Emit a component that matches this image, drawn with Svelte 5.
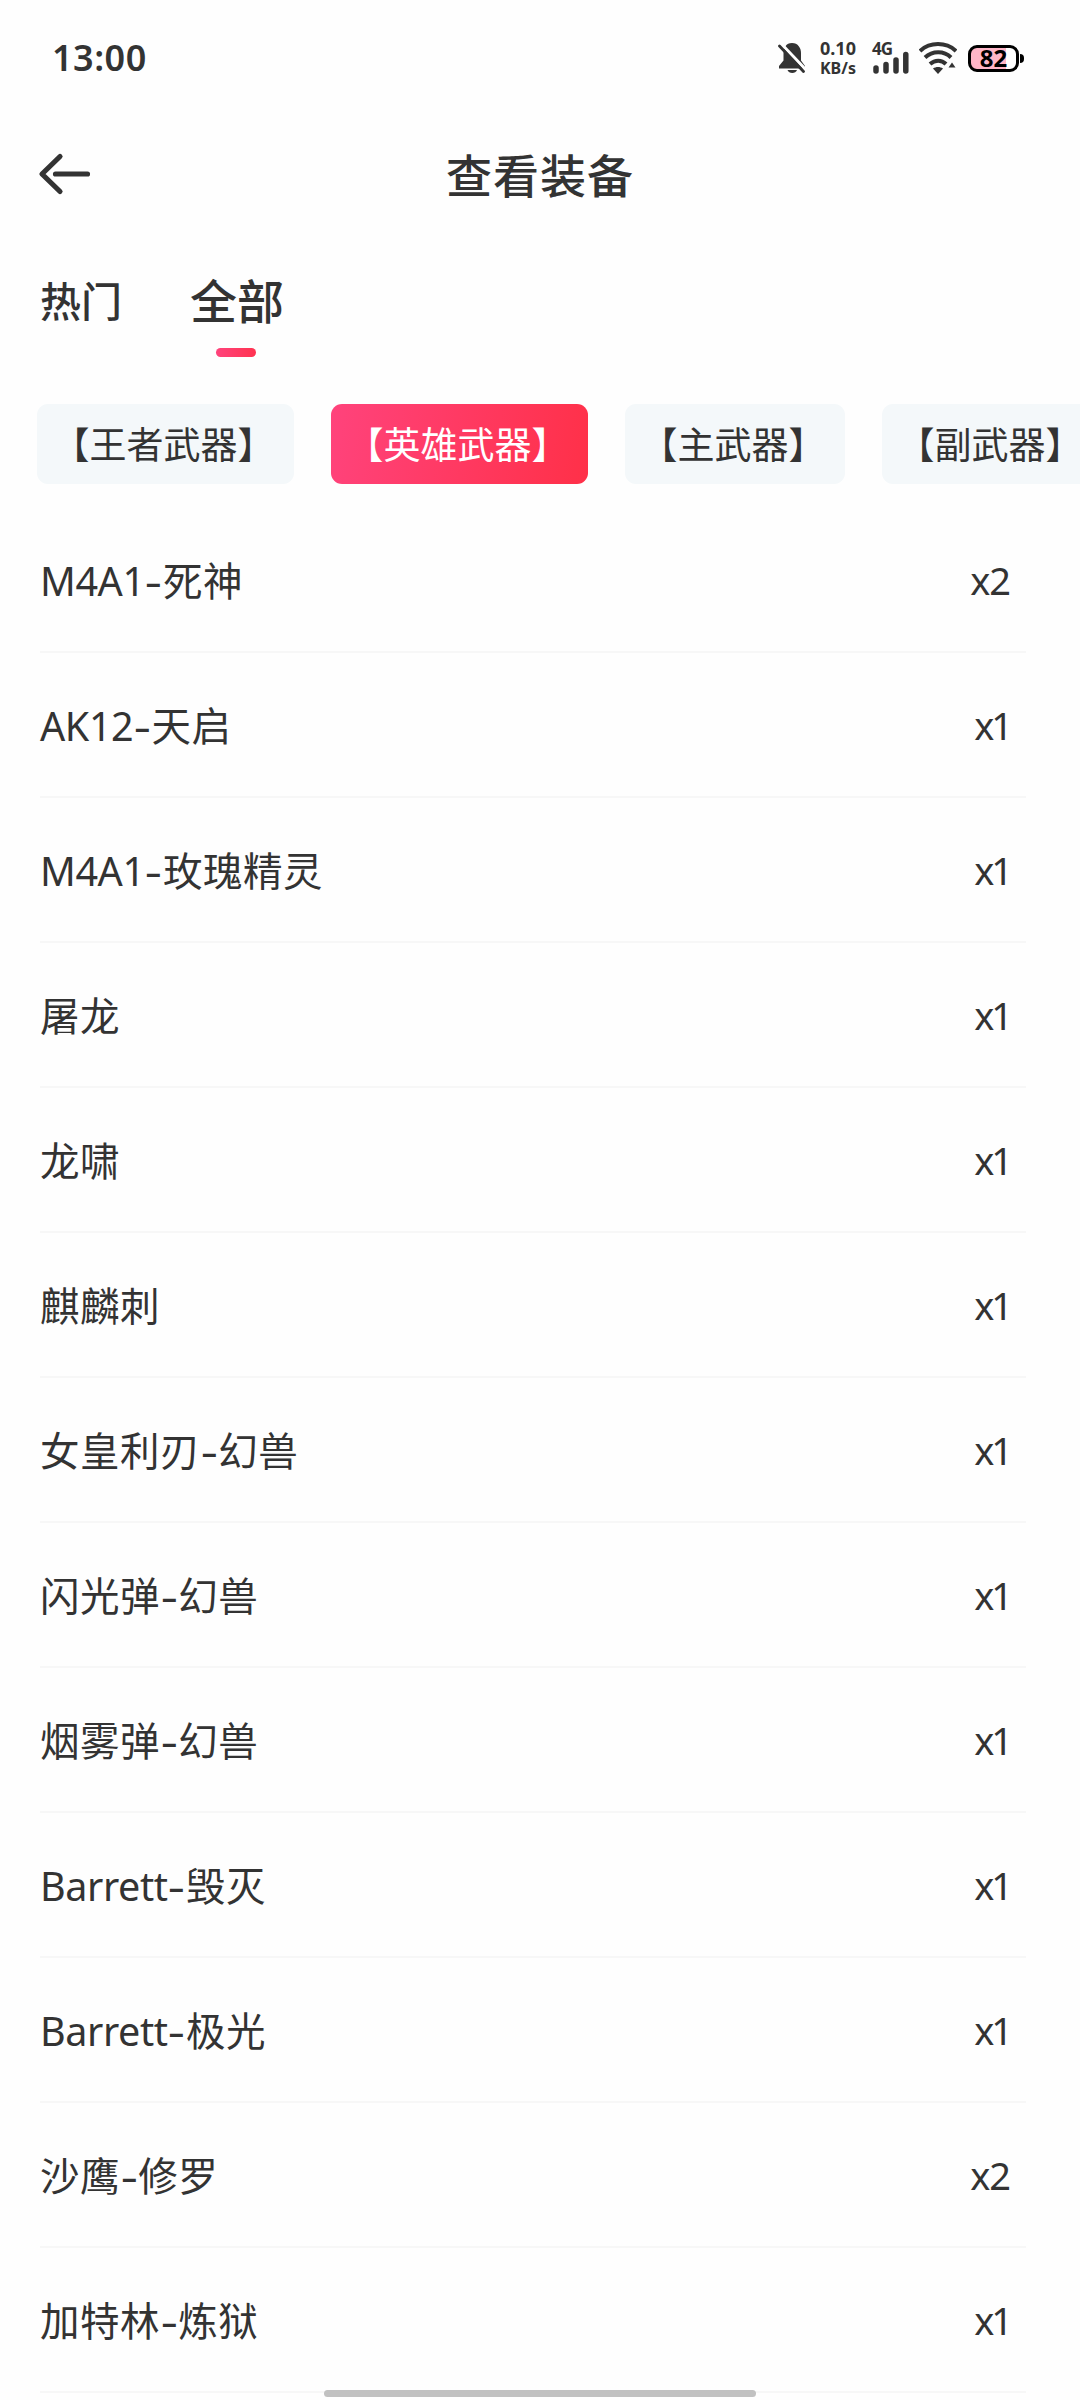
<script lang="ts">
	type Equipment = { name: string; count: number };

	const tabs = ['热门', '全部'];
	const categories = ['【王者武器】', '【英雄武器】', '【主武器】', '【副武器】'];
	const equipments: Equipment[] = [
		{ name: 'M4A1-死神', count: 2 },
		{ name: 'AK12-天启', count: 1 },
		{ name: 'M4A1-玫瑰精灵', count: 1 },
		{ name: '屠龙', count: 1 },
		{ name: '龙啸', count: 1 },
		{ name: '麒麟刺', count: 1 },
		{ name: '女皇利刃-幻兽', count: 1 },
		{ name: '闪光弹-幻兽', count: 1 },
		{ name: '烟雾弹-幻兽', count: 1 },
		{ name: 'Barrett-毁灭', count: 1 },
		{ name: 'Barrett-极光', count: 1 },
		{ name: '沙鹰-修罗', count: 2 },
		{ name: '加特林-炼狱', count: 1 }
	];

	let selectedTab = '全部';
	let selectedCategory = '【英雄武器】';
</script>

<div class="screen">
	<div class="status">
		<span class="time">13:00</span>
		<div class="indicators">
			<svg class="bell" width="29" height="34" viewBox="0 0 29 34">
				<path
					d="M14 2C8 2 5.500 7 5.500 12v7.500L1 25v2.500h26V25l-4-5.500V12C23 7 20 2 14 2Z"
					fill="#333"
				/>
				<path d="M9.500 29h9.500c-1.200 4-8.300 4-9.500 0Z" fill="#333" />
				<path d="M3.500 3 28 29" stroke="#fff" stroke-width="3" />
				<path d="M1.500 5 25.500 30.500" stroke="#333" stroke-width="2.800" stroke-linecap="round" />
			</svg>
			<div class="speed">
				<span>0.10</span>
				<span>KB/s</span>
			</div>
			<div class="mobile">
				<span>4G</span>
				<svg width="38" height="34" viewBox="0 0 38 34" stroke="#333" stroke-width="5.500" stroke-linecap="round">
					<path d="M4 27v3M14 23.500v6.500M24 19v11M33.800 13.500V30" />
				</svg>
			</div>
			<svg class="wifi" width="38" height="34" viewBox="0 0 38 34" fill="none" stroke="#333" stroke-width="4">
				<path d="M1 10C11 .800 27 .800 37 10" />
				<path d="M6 16.500c7.500-7 19-7 26 0" />
				<path d="M11 23c5-4.500 11.500-4.500 16 0" />
				<path d="m14 27.500 5 5.500 5-5.500c-3-2-7-2-10 0Z" fill="#333" stroke="none" />
				<path d="m29.500 26.500 3.500-5 3.500 5Z" fill="#333" stroke="none" />
			</svg>
			<div class="battery">
				<span>82</span>
			</div>
		</div>
	</div>

	<header>
		<button class="back" aria-label="返回">
			<svg width="54" height="44" viewBox="0 0 54 44">
				<path
					d="M22 4.500 4 22l18 17.500M17.500 22H49.500"
					fill="none"
					stroke="#333"
					stroke-width="5.200"
					stroke-linecap="round"
					stroke-linejoin="round"
				/>
			</svg>
		</button>
		<h1>查看装备</h1>
	</header>

	<nav>
		{#each tabs as tab}
			<button class="tab" class:active={tab === selectedTab} on:click={() => (selectedTab = tab)}>
				{tab}
			</button>
		{/each}
	</nav>

	<div class="categories">
		{#each categories as category}
			<button
				class="category"
				class:active={category === selectedCategory}
				on:click={() => (selectedCategory = category)}>{category}</button
			>
		{/each}
	</div>

	<ul>
		{#each equipments as { name, count }}
			<li>
				<span class="name">
					{#each name.split('-') as part, i}{#if i > 0}<span class="dash">-</span>{/if}<span
							class:latin={/^[A-Z]/.test(part)}>{part}</span
						>{/each}
				</span>
				<span class="count" class:single={count === 1}>x{count}</span>
			</li>
		{/each}
	</ul>

	<div class="home-bar"></div>
</div>

<style>
	:global(body) {
		margin: 0;
		background: #fefefe;
	}

	.screen {
		position: relative;
		width: 1080px;
		height: 2400px;
		overflow: hidden;
		background: #fefefe;
		color: #333;
		font-family: 'Noto Sans', 'Noto Sans CJK SC', sans-serif;
	}

	button {
		margin: 0;
		padding: 0;
		border: none;
		background: none;
		color: inherit;
		font: inherit;
	}

	.status {
		display: flex;
		justify-content: space-between;
		align-items: center;
		height: 116px;
		padding: 0 55px 0 52px;
	}

	.time {
		padding-bottom: 2px;
		font-size: 36px;
		font-weight: 600;
		letter-spacing: 0.5px;
	}

	.indicators {
		display: flex;
		align-items: center;
	}

	.bell {
		margin-right: 13px;
	}

	.speed {
		display: flex;
		flex-direction: column;
		width: 40px;
		margin-right: 12px;
		font-size: 18px;
		font-weight: 700;
		line-height: 20px;
	}

	.speed span:last-child {
		font-size: 16px;
	}

	.mobile {
		position: relative;
		height: 34px;
		margin-right: 9px;
	}

	.mobile span {
		position: absolute;
		left: 0;
		top: -2px;
		font-size: 17px;
		font-weight: 700;
		line-height: 20px;
		letter-spacing: -1px;
	}

	.wifi {
		margin-right: 11px;
	}

	.battery {
		position: relative;
		box-sizing: border-box;
		width: 51px;
		height: 27px;
		margin-right: 6px;
		border: 3px solid #000;
		border-radius: 9px;
		background: linear-gradient(90deg, #ffb6c8 78%, #fff 78%);
		color: #000;
		font-size: 24px;
		font-weight: 700;
		line-height: 20px;
		text-align: center;
	}

	.battery::after {
		content: '';
		position: absolute;
		top: 6px;
		right: -8px;
		width: 4px;
		height: 9px;
		border-radius: 0 5px 5px 0;
		background: #000;
	}

	header {
		display: grid;
		grid-template-columns: 100px 1fr 100px;
		align-items: center;
		height: 116px;
	}

	.back {
		display: flex;
		padding-left: 38px;
	}

	h1 {
		margin: 0;
		padding-bottom: 3px;
		font-size: 46px;
		font-weight: 500;
		letter-spacing: 1px;
		text-align: center;
	}

	nav {
		display: flex;
		align-items: center;
		gap: 68px;
		height: 133px;
		padding: 0 0 7px 40px;
	}

	.tab {
		position: relative;
		font-size: 41px;
		font-weight: 500;
	}

	.tab.active {
		font-size: 47px;
		font-weight: 500;
	}

	.tab.active::after {
		content: '';
		position: absolute;
		left: 50%;
		bottom: -24px;
		width: 40px;
		height: 9px;
		margin-left: -21px;
		border-radius: 5px;
		background: linear-gradient(90deg, #ff437c, #ff3350);
	}

	.categories {
		display: flex;
		gap: 37px;
		margin-top: 32px;
		padding-left: 37px;
	}

	.category {
		flex: none;
		box-sizing: border-box;
		height: 80px;
		padding: 2px 19.500px 0 15.500px;
		border-radius: 11px;
		background: #f4f8fa;
		font-size: 37px;
		line-height: 78px;
		white-space: nowrap;
	}

	.category.active {
		background: linear-gradient(100deg, #ff437c, #ff3048);
		color: #fff;
	}

	ul {
		margin: 24px 54px 0 40px;
		padding: 0;
		list-style: none;
	}

	li {
		display: flex;
		justify-content: space-between;
		align-items: center;
		box-sizing: border-box;
		height: 145px;
		padding-right: 16px;
		border-bottom: 2px solid #f7f7f7;
		font-size: 39.500px;
	}

	.name {
		padding-bottom: 2px;
		letter-spacing: 0.5px;
	}

	.latin {
		letter-spacing: -0.4px;
	}

	.dash {
		display: inline-block;
		margin: 0 2.500px;
		transform: scaleX(1.35);
	}

	.count {
		padding-top: 1px;
		font-size: 38px;
		letter-spacing: -1px;
	}

	.count.single {
		letter-spacing: -3px;
	}

	.home-bar {
		position: absolute;
		left: 324px;
		bottom: 3px;
		width: 432px;
		height: 7px;
		border-radius: 4px;
		background: #c1c1c1;
	}
</style>
